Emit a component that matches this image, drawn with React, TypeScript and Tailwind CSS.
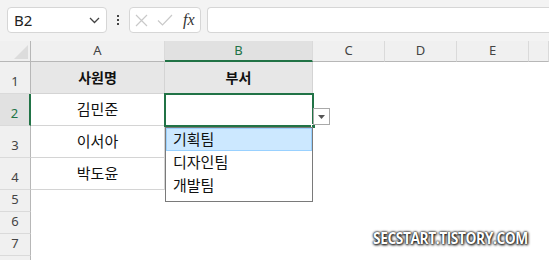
import React from "react";

const cols = ["A", "B", "C", "D", "E", ""];
const colW = ["w-[134px]", "w-[148px]", "w-[72px]", "w-[72px]", "w-[72px]", "w-[20px]"];

const kr = { fontFamily: '"Noto Sans CJK KR", "Noto Sans", sans-serif' };
const ui = { fontFamily: '"Noto Sans", "Open Sans", sans-serif' };

function RowHeader({ n, h, sel }: { n: number | string; h: string; sel?: boolean }) {
  return (
    <div
      className={`${h} w-[31px] shrink-0 flex items-end justify-center pb-[2px] text-[13px] border-b border-[#dadada] ${
        sel ? "bg-[#e1e1e1] border-r-2 border-r-[#217346] text-[#217346]" : "bg-[#f0f0f0] border-r border-r-[#b7b7b7] text-[#444]"
      }`}
      style={ui}
    >
      {n}
    </div>
  );
}

export default function App() {
  const data = [
    ["김민준", ""],
    ["이서아", ""],
    ["박도윤", ""],
  ];
  return (
    <div className="relative w-[549px] h-[260px] overflow-hidden bg-white">
      {/* toolbar */}
      <div className="h-[41px] bg-[#f3f3f3] flex items-start pt-[7px] pl-[7px] gap-0">
        <div className="w-[100px] h-[26px] bg-white border border-[#d6d6d6] rounded-[4px] flex items-center justify-between pl-[6px] pr-[6px]">
          <span className="text-[15px] text-[#222]" style={ui}>B2</span>
          <svg width="11" height="7" viewBox="0 0 11 7">
            <path d="M1 1 L5.5 5.5 L10 1" stroke="#444" strokeWidth="1.3" fill="none" />
          </svg>
        </div>
        <div className="w-[22px] h-[26px] flex flex-col items-center justify-center gap-[2px]">
          <div className="w-[2px] h-[2px] bg-[#444]" />
          <div className="w-[2px] h-[2px] bg-[#444]" />
          <div className="w-[2px] h-[2px] bg-[#444]" />
        </div>
        <div className="w-[72px] h-[26px] bg-white border border-[#d6d6d6] rounded-[4px] flex items-center pl-[5px] gap-[9px]">
          <svg width="13" height="13" viewBox="0 0 13 13">
            <path d="M1 1 L12 12 M12 1 L1 12" stroke="#c9c9c9" strokeWidth="1.2" fill="none" />
          </svg>
          <svg width="16" height="12" viewBox="0 0 16 12">
            <path d="M1 6.5 L5.5 11 L15 1" stroke="#c9c9c9" strokeWidth="1.2" fill="none" />
          </svg>
          <span className="text-[16px] italic text-[#333] leading-none ml-[1px]" style={{ fontFamily: '"Liberation Serif", serif' }}>
            fx
          </span>
        </div>
        <div className="ml-[6px] flex-1 h-[26px] bg-white border border-[#d6d6d6] rounded-l-[4px] border-r-0" />
      </div>

      {/* column header row */}
      <div className="flex h-[21px]">
        <div className="w-[31px] h-[21px] bg-[#f0f0f0] border-r border-b border-[#b7b7b7] relative flex items-end justify-end p-[2px]">
          <svg width="14" height="14" viewBox="0 0 14 14">
            <path d="M14 0 L14 14 L0 14 Z" fill="#dcdcdc" />
          </svg>
        </div>
        {cols.map((c, i) => (
          <div
            key={i}
            className={`${colW[i]} shrink-0 h-[21px] flex items-center justify-center text-[13px] border-r border-r-[#dadada] ${
              c === "B"
                ? "bg-[#e1e1e1] border-b-2 border-b-[#217346] text-[#217346]"
                : "bg-[#f0f0f0] border-b border-b-[#b7b7b7] text-[#444]"
            }`}
            style={ui}
          >
            {c}
          </div>
        ))}
      </div>

      {/* row 1 */}
      <div className="flex">
        <RowHeader n={1} h="h-[32px]" />
        <div className="w-[134px] h-[32px] bg-[#e7e7e7] border-r border-b border-[#d4d4d4] flex items-center justify-center text-[14px] font-bold text-[#111]" style={kr}>
          사원명
        </div>
        <div className="w-[148px] h-[32px] bg-[#e7e7e7] border-r border-b border-[#d4d4d4] flex items-center justify-center text-[14px] font-bold text-[#111]" style={kr}>
          부서
        </div>
      </div>

      {data.map((r, idx) => (
        <div className="flex" key={idx}>
          <RowHeader n={idx + 2} h="h-[32px]" sel={idx === 0} />
          <div className="w-[134px] h-[32px] border-r border-b border-[#d4d4d4] flex items-center justify-center text-[15px] text-[#111]" style={kr}>
            {r[0]}
          </div>
          <div className="w-[148px] h-[32px] border-r border-b border-[#d4d4d4]" />
        </div>
      ))}

      {[5, 6, 7].map((n) => (
        <div className="flex" key={n}>
          <RowHeader n={n} h="h-[22px]" />
        </div>
      ))}
      <div className="flex">
        <RowHeader n="" h="h-[22px]" />
      </div>

      {/* selection box on B2 */}
      <div className="absolute left-[164px] top-[93px] w-[150px] h-[34px] border-2 border-[#217346]" />
      <div className="absolute left-[311px] top-[124px] w-[5px] h-[5px] bg-[#217346] border border-white" />

      {/* dropdown button */}
      <div className="absolute left-[313px] top-[108px] w-[17px] h-[17px] bg-white border border-[#a9a9a9] flex items-center justify-center">
        <svg width="7" height="4" viewBox="0 0 7 4">
          <path d="M0 0 L7 0 L3.5 4 Z" fill="#555" />
        </svg>
      </div>

      {/* dropdown list */}
      <div className="absolute left-[165px] top-[127px] w-[148px] h-[75px] bg-white border border-[#7a7a7a] flex flex-col text-[15px] text-[#111]" style={kr}>
        <div className="h-[23px] bg-[#cce8ff] border border-[#99d1ff] flex items-center pl-[6px]">기획팀</div>
        <div className="h-[23px] flex items-center pl-[7px]">디자인팀</div>
        <div className="h-[23px] flex items-center pl-[7px]">개발팀</div>
      </div>

      {/* watermark */}
      <div
        className="absolute left-[373px] top-[230px] origin-left scale-x-[0.86] text-[16px] font-bold text-white tracking-[-0.5px] leading-none [text-shadow:0_0_2px_#000,0_0_3px_#333,1px_1px_3px_#000]"
        style={{ fontFamily: '"Open Sans", "Noto Sans", sans-serif' }}
      >
        SECSTART.TISTORY.COM
      </div>
    </div>
  );
}
